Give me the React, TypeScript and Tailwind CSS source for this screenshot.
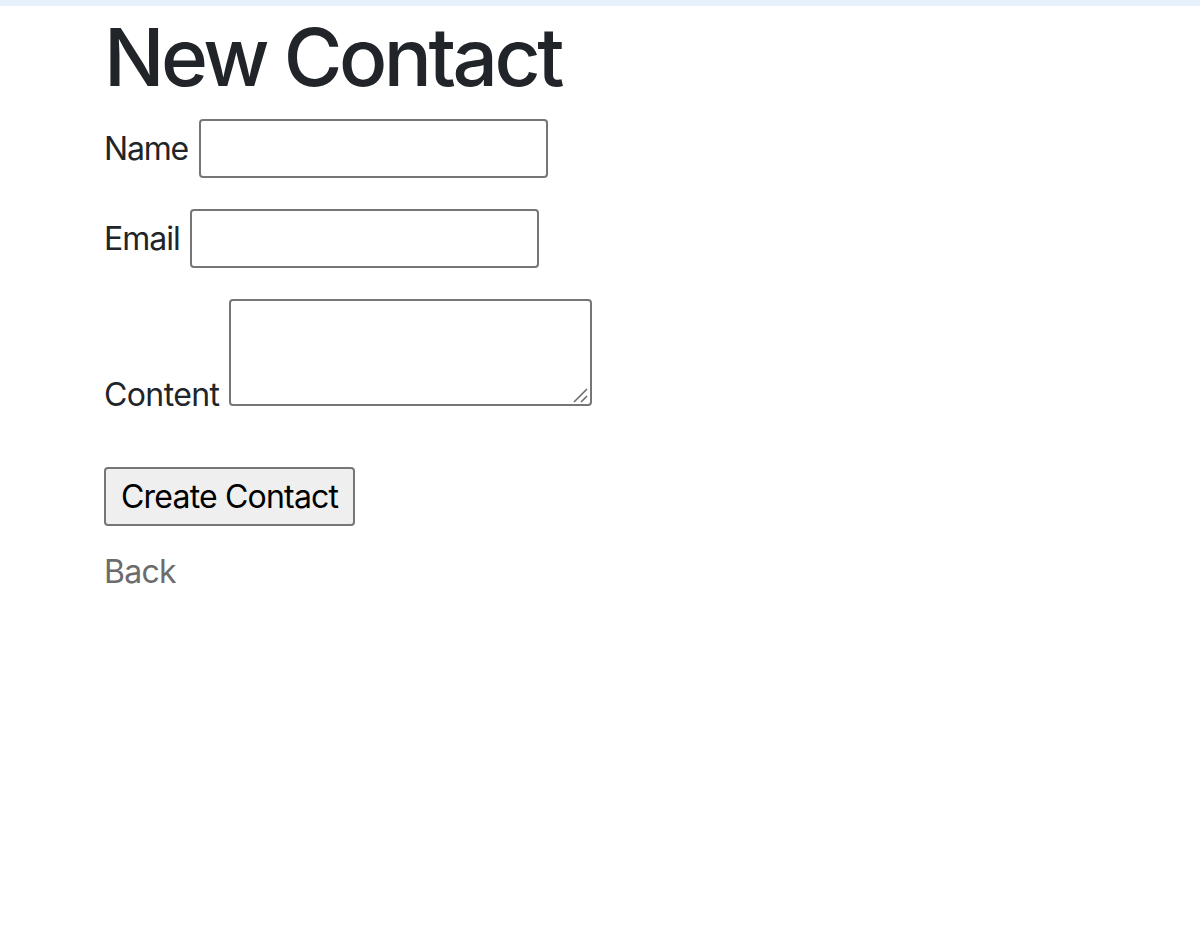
import React from "react";

export default function App() {
  return (
    <div className="min-h-screen bg-white" style={{ fontFamily: "Inter, 'Noto Sans', sans-serif" }}>
      <div className="h-[6px] bg-[#e6f1fb]" />
      <main className="pl-[104px] pt-[3px] text-[#212529]">
        <h1 className="text-[80px] leading-[96px] font-medium m-0 tracking-[-3.5px]">New Contact</h1>
        <form className="mt-[14px]" onSubmit={(e) => e.preventDefault()}>
          <div className="flex items-center h-[58px]">
            <label className="text-[32px] leading-[32px] tracking-[-1.2px] mt-[2px]">Name</label>
            <input
              type="text"
              className="ml-[11px] w-[349px] h-[59px] border-2 border-[#767676] rounded-[4px] bg-white outline-none"
            />
          </div>
          <div className="flex items-center h-[58px] mt-[32px]">
            <label className="text-[32px] leading-[32px] tracking-[-1px] mt-[2px]">Email</label>
            <input
              type="text"
              className="ml-[10px] w-[349px] h-[59px] border-2 border-[#767676] rounded-[4px] bg-white outline-none"
            />
          </div>
          <div className="flex items-end mt-[32px]">
            <label className="text-[32px] leading-[32px] tracking-[-0.6px] -mb-[5px]">Content</label>
            <div className="relative ml-[10px] w-[363px] h-[107px]">
              <textarea className="block w-full h-full border-2 border-[#767676] rounded-[4px] bg-white outline-none resize-none" />
              <svg className="absolute right-[3px] bottom-[3px] pointer-events-none" width="16" height="16" viewBox="0 0 16 16">
                <line x1="1" y1="15" x2="14" y2="2" stroke="#6b6b6b" strokeWidth="1.6" />
                <line x1="8" y1="15" x2="14" y2="9" stroke="#6b6b6b" strokeWidth="1.6" />
              </svg>
            </div>
          </div>
          <div className="mt-[61px]">
            <button
              type="submit"
              className="h-[59px] px-[15px] border-2 border-[#767676] rounded-[4px] bg-[#efefef] text-black text-[32px] leading-[32px] tracking-[-0.8px]"
            >
              Create Contact
            </button>
          </div>
        </form>
        <div className="mt-[30px]">
          <a href="#" className="text-[32px] leading-[32px] text-[#6c6c6c] tracking-[-0.7px]">Back</a>
        </div>
      </main>
    </div>
  );
}
